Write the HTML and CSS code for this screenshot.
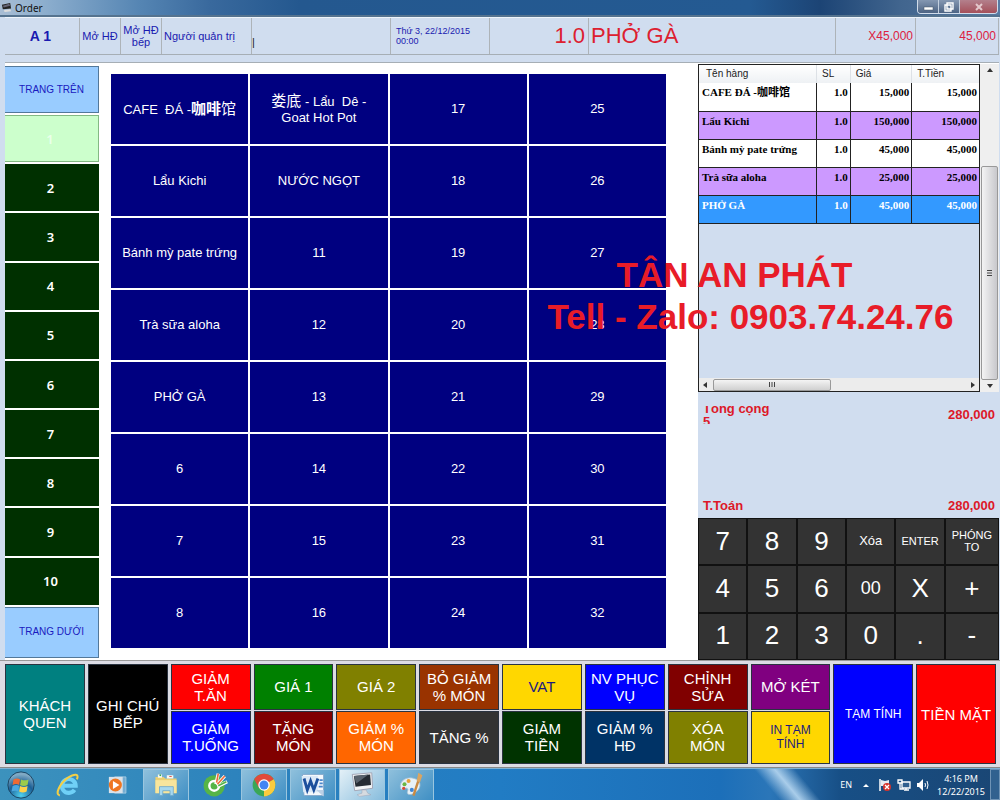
FILE: index.html
```
<!DOCTYPE html>
<html lang="vi">
<head>
<meta charset="utf-8">
<title>Order</title>
<link rel="stylesheet" href="styles.css">
</head>
<body>
<header class="titlebar">
  <svg class="app-icon" viewBox="0 0 12 12" aria-hidden="true"><path d="M1 3 10 1 11 7 2 8z" fill="#222"/><path d="M2 4 9 2 10 4 3 6z" fill="#667"/><path d="M3 9 10 8 11 10 4 11z" fill="#ddd"/></svg>
  <h1 class="title">Order</h1>
  <div class="window-buttons">
    <button class="win" aria-label="Minimize"><svg viewBox="0 0 20 12"><rect x="6" y="6" width="9" height="3" fill="#fff" stroke="#456" stroke-width=".5"/></svg></button>
    <button class="win" aria-label="Restore"><svg viewBox="0 0 20 12"><path d="M8 2h6v6h-6zM6 4h6v6H6z" fill="#5d7594" stroke="#fff" stroke-width="1.4"/><path d="M8.500 6.500h1v1h-1z" fill="#fff"/></svg></button>
    <button class="win close" aria-label="Close"><svg viewBox="0 0 20 12"><path d="M7 3l6 6M13 3l-6 6" stroke="#e4c8cc" stroke-width="2"/></svg></button>
  </div>
</header>

<section class="infobar">
  <div class="cell table-name">A 1</div>
  <button class="cell">Mở HĐ</button>
  <button class="cell two-line">Mở HĐ bếp</button>
  <div class="cell left">Người quản trị</div>
  <input class="cell entry" aria-label="Nhập" value="|">
  <div class="cell left date">Thứ 3, 22/12/2015<br>00:00</div>
  <div class="cell big right">1.0</div>
  <div class="cell big left">PHỞ GÀ</div>
  <div class="cell price">X45,000</div>
  <div class="cell price">45,000</div>
</section>

<main class="main">
  <nav class="pages">
    <button class="page nav-page">TRANG TRÊN</button>
    <button class="page active">1</button>
    <button class="page">2</button>
    <button class="page">3</button>
    <button class="page">4</button>
    <button class="page">5</button>
    <button class="page">6</button>
    <button class="page">7</button>
    <button class="page">8</button>
    <button class="page">9</button>
    <button class="page">10</button>
    <button class="page nav-page">TRANG DƯỚI</button>
  </nav>

  <section class="items">
    <button class="item">CAFE&nbsp; ĐÁ -<span class="han"><b>咖啡</b>馆</span></button>
    <button class="item">Lẩu Kichi</button>
    <button class="item">Bánh mỳ pate trứng</button>
    <button class="item">Trà sữa aloha</button>
    <button class="item">PHỞ GÀ</button>
    <button class="item">6</button>
    <button class="item">7</button>
    <button class="item">8</button>
    <button class="item"><span class="han">娄底</span> - Lẩu&nbsp; Dê -<br>Goat Hot Pot</button>
    <button class="item">NƯỚC NGỌT</button>
    <button class="item">11</button>
    <button class="item">12</button>
    <button class="item">13</button>
    <button class="item">14</button>
    <button class="item">15</button>
    <button class="item">16</button>
    <button class="item">17</button>
    <button class="item">18</button>
    <button class="item">19</button>
    <button class="item">20</button>
    <button class="item">21</button>
    <button class="item">22</button>
    <button class="item">23</button>
    <button class="item">24</button>
    <button class="item">25</button>
    <button class="item">26</button>
    <button class="item">27</button>
    <button class="item">28</button>
    <button class="item">29</button>
    <button class="item">30</button>
    <button class="item">31</button>
    <button class="item">32</button>
  </section>

  <aside class="bill">
    <div class="list-area">
      <div class="list">
        <table class="lines">
          <thead><tr><th class="c-name">Tên hàng</th><th class="c-qty">SL</th><th class="c-price">Giá</th><th>T.Tiền</th></tr></thead>
          <tbody>
            <tr><td>CAFE ĐÁ -咖啡馆</td><td>1.0</td><td>15,000</td><td>15,000</td></tr>
            <tr class="alt"><td>Lẩu Kichi</td><td>1.0</td><td>150,000</td><td>150,000</td></tr>
            <tr><td>Bánh mỳ pate trứng</td><td>1.0</td><td>45,000</td><td>45,000</td></tr>
            <tr class="alt"><td>Trà sữa aloha</td><td>1.0</td><td>25,000</td><td>25,000</td></tr>
            <tr class="selected"><td>PHỞ GÀ</td><td>1.0</td><td>45,000</td><td>45,000</td></tr>
          </tbody>
        </table>
        <div class="hscroll">
          <svg class="arrow" viewBox="0 0 12 12"><path d="M8 3v6L4 6z" fill="#333"/></svg>
          <div class="hthumb"><svg class="grip" viewBox="0 0 8 8"><path d="M1.500 1v5M4 1v5M6.500 1v5" stroke="#444"/></svg></div>
          <svg class="arrow end" viewBox="0 0 12 12"><path d="M4 3v6l4-3z" fill="#333"/></svg>
        </div>
      </div>
      <div class="vscroll">
        <svg class="arrow" viewBox="0 0 12 12"><path d="M3 8h6L6 4z" fill="#333"/></svg>
        <div class="vthumb"><svg class="grip" viewBox="0 0 8 8"><path d="M1 1.500h5M1 4h5M1 6.500h5" stroke="#444"/></svg></div>
        <svg class="arrow" viewBox="0 0 12 12"><path d="M3 4h6L6 8z" fill="#333"/></svg>
      </div>
    </div>
    <div class="totals">
      <div class="total"><span class="clipped">Tổng cộng<br>5</span><span>280,000</span></div>
      <div class="total"><span>T.Toán</span><span>280,000</span></div>
    </div>
    <div class="keypad">
      <button class="key">7</button><button class="key">8</button><button class="key">9</button><button class="key small">Xóa</button><button class="key tiny">ENTER</button><button class="key tiny">PHÓNG TO</button>
      <button class="key">4</button><button class="key">5</button><button class="key">6</button><button class="key medium">00</button><button class="key">X</button><button class="key">+</button>
      <button class="key">1</button><button class="key">2</button><button class="key">3</button><button class="key">0</button><button class="key">.</button><button class="key">-</button>
    </div>
  </aside>

  <div class="watermark"><div class="brand">TÂN AN PHÁT</div><div>Tell - Zalo: 0903.74.24.76</div></div>
</main>

<section class="functions">
  <button class="fn tall teal">KHÁCH<br>QUEN</button>
  <button class="fn tall black">GHI CHÚ<br>BẾP</button>
  <button class="fn red">GIẢM<br>T.ĂN</button>
  <button class="fn blue">GIẢM<br>T.UỐNG</button>
  <button class="fn green">GIÁ 1</button>
  <button class="fn maroon">TẶNG<br>MÓN</button>
  <button class="fn olive">GIÁ 2</button>
  <button class="fn orange">GIẢM %<br>MÓN</button>
  <button class="fn brown">BỎ GIẢM<br>% MÓN</button>
  <button class="fn gray">TĂNG %</button>
  <button class="fn yellow">VAT</button>
  <button class="fn forest">GIẢM<br>TIỀN</button>
  <button class="fn blue">NV PHỤC<br>VỤ</button>
  <button class="fn navy">GIẢM %<br>HĐ</button>
  <button class="fn maroon">CHỈNH<br>SỬA</button>
  <button class="fn olive">XÓA<br>MÓN</button>
  <button class="fn purple">MỞ KÉT</button>
  <button class="fn yellow compact">IN TẠM<br>TÍNH</button>
  <button class="fn tall blue compact">TẠM TÍNH</button>
  <button class="fn tall red">TIỀN MẶT</button>
</section>

<footer class="taskbar">
  <button class="task start" aria-label="Start"><svg viewBox="0 0 32 32"><defs><radialGradient id="orb" cx=".5" cy=".9" r=".8"><stop offset="0" stop-color="#4fd0ee"/><stop offset=".6" stop-color="#1c5f96"/><stop offset="1" stop-color="#7fa9c4"/></radialGradient></defs><circle cx="16" cy="16" r="14" fill="url(#orb)" stroke="#19415f"/><path d="M8 10q4-2 7 0l-1 6q-3-2-7 0z" fill="#ee6a33"/><path d="M16 10q4 2 8 0l-1 6q-4 2-8 0z" fill="#9ccb4a"/><path d="M7 17q4-2 7 0l-1 6q-3-2-7 0z" fill="#4aa7e0"/><path d="M15 17q4 2 8 0l-1 6q-4 2-8 0z" fill="#ffd04a"/></svg></button>
  <button class="task" aria-label="Internet Explorer"><svg viewBox="0 0 32 32"><path d="M24 22a8.500 8.500 0 1 1 1.500-5H9" fill="none" stroke="#6fd0f7" stroke-width="5"/><path d="M6 29c-7-1 0-15 10-22 8-5 14-5 11 2" fill="none" stroke="#f4cf45" stroke-width="2.500"/></svg></button>
  <button class="task" aria-label="Media Player"><svg viewBox="0 0 32 32"><path d="M13 6h14v20H13z" fill="#75add2" stroke="#a9cfe5"/><path d="M6 6h17v20H6z" fill="#d9e2ea"/><circle cx="14" cy="16" r="8" fill="#ef7622"/><path d="M11 11v10l8-5z" fill="#fff"/></svg></button>
  <button class="task open" aria-label="Explorer"><svg viewBox="0 0 32 32"><path d="M3 6h10l2 2h14v18H3z" fill="#e9cf73"/><path d="M6 3h5v4H6zM17 4h8v4h-8z" fill="#f7f7ee"/><path d="M8 3h2v2H8z" fill="#34a853"/><path d="M20 5h3v1h-3z" fill="#d33"/><path d="M3 10h26v16H3z" fill="#f8e59c"/><path d="M8 29V18h17v11h-4v-6h-9v6z" fill="#a7d8ee" stroke="#6ba9cd"/></svg></button>
  <button class="task" aria-label="Cốc Cốc"><svg viewBox="0 0 32 32"><circle cx="15" cy="17" r="13" fill="#56b447"/><circle cx="15" cy="17" r="6" fill="none" stroke="#fff" stroke-width="3"/><path d="M17 15 20 2M18 16 28 5M19 18 31 12" stroke="#fff" stroke-width="4"/><path d="M18 13 20 2M19 15 28 5" stroke="#ef6a3a" stroke-width="2"/><path d="M20 17l10-5" stroke="#56b447" stroke-width="2"/></svg></button>
  <button class="task open" aria-label="Chrome"><svg viewBox="0 0 32 32"><circle cx="16" cy="16" r="14" fill="#3aa757"/><path d="M16 16 3.900 9A14 14 0 0 1 28.100 9z" fill="#e24a3b"/><path d="M16 16 28.100 9A14 14 0 0 1 16 30z" fill="#fbcb3d"/><path d="M4 9 10 20 16 16z" fill="#e24a3b"/><circle cx="16" cy="16" r="7" fill="#fff"/><circle cx="16" cy="16" r="5.500" fill="#4285f4"/></svg></button>
  <button class="task open" aria-label="Word"><svg viewBox="0 0 32 32"><path d="M3 3h26v26H5z" fill="#f4f8fc" stroke="#7fa2c8"/><path d="M2 5h20v20H4z" fill="#dce9f7"/><path d="M5 8l4 14 4-11 4 11 5-14" fill="none" stroke="#1c4f9c" stroke-width="3.500"/><path d="M24 10h4M24 14h4M23 18h5" stroke="#4a86cb" stroke-width="2"/><path d="M20 22h9v8z" fill="#bcd0e6"/></svg></button>
  <button class="task open current" aria-label="Order"><svg viewBox="0 0 32 32"><path d="M4 3 28 1 29 20 7 23z" fill="#f2f4f6" stroke="#99a"/><path d="M6 5 26 3 27 16 8 18z" fill="#252b33"/><path d="M6 5 24 3 9 14z" fill="#59626d"/><path d="M16 22h5l2 4 4 2-14 2-3-2 6-2z" fill="#d6dbe0" stroke="#99a" stroke-width=".5"/></svg></button>
  <button class="task open" aria-label="Paint"><svg viewBox="0 0 32 32"><path d="M3 20C1 10 12 5 20 8c8 2 9 10 4 15-4 4-9 6-12 4-2-3 2-5-1-7-2-1-6 4-8 0z" fill="#e8f1f7" stroke="#a1bfd3"/><circle cx="8" cy="15" r="2.500" fill="#6bb744"/><circle cx="13" cy="11" r="2.500" fill="#e8a13a"/><circle cx="17" cy="22" r="2.500" fill="#3f86d5"/><circle cx="7" cy="20" r="2" fill="#d84a3a"/><path d="M19 29 25 11" stroke="#c98a43" stroke-width="3"/><path d="M23 11l2-10 5 3-3 9z" fill="#d9a562"/></svg></button>
  <div class="tray">
    <span class="lang">EN</span>
    <svg class="tray-icon" viewBox="0 0 14 14" aria-hidden="true"><path d="M4 9h6L7 6z" fill="#fff"/></svg>
    <svg class="tray-icon" viewBox="0 0 14 14" aria-hidden="true"><path d="M2 1v12" stroke="#fff" stroke-width="1.500"/><path d="M3 2l4 1 4-1v6H3z" fill="#e6edf3"/><circle cx="9" cy="9" r="4" fill="#d5332c"/><path d="M7 7l4 4M11 7l-4 4" stroke="#fff" stroke-width="1.300"/></svg>
    <svg class="tray-icon" viewBox="0 0 14 14" aria-hidden="true"><path d="M5 4h8v6H5zM7 12h5M9 10v2" fill="#315f8e" stroke="#fff" stroke-width="1.300"/><path d="M1 2h4v3H1zM3 5v6h4" fill="none" stroke="#fff" stroke-width="1.300"/></svg>
    <svg class="tray-icon" viewBox="0 0 14 14" aria-hidden="true"><path d="M1 5h2l4-4v12L3 9H1z" fill="#fff"/><path d="M9 5q1 2 0 4M11 3q2 4 0 8" fill="none" stroke="#fff"/></svg>
    <time class="clock">4:16 PM<br>12/22/2015</time>
    <button class="show-desktop" aria-label="Show desktop"></button>
  </div>
</footer>
</body>
</html>
```
FILE: styles.css
```
* { box-sizing: border-box; }
body {
  margin: 0;
  min-height: 100vh;
  display: flex;
  flex-direction: column;
  background: #d0ddef;
  font: 14px/16px "Liberation Sans", "Noto Sans CJK SC", sans-serif;
  color: #1a1ab0;
}
button, input {
  margin: 0;
  padding: 0;
  border: 0;
  border-radius: 0;
  background: none;
  font: inherit;
  color: inherit;
}
svg { display: block; }

.titlebar {
  display: flex;
  align-items: center;
  gap: 3px;
  height: 17px;
  padding-left: 1px;
  border-bottom: 2px solid #55738f;
  background: linear-gradient(90deg, #a8bdd4 0, #8fb0cf 40px, #5585b3 140px, #39699d 210px, #24588f 300px, #245a92 75%, #1c4475 82%, #41658e 90%, #587ba3 100%);
}
.app-icon { width: 11px; height: 11px; }
.title {
  margin: 0;
  font: 10px/14px "Noto Sans", sans-serif;
  color: #111;
}
.window-buttons {
  display: flex;
  align-self: flex-start;
  margin-left: auto;
  margin-right: 2px;
  border: 1px solid #d0dcea;
  border-top: 0;
  border-radius: 0 0 4px 4px;
  overflow: hidden;
}
.win {
  width: 21px;
  height: 13px;
  border-right: 1px solid #c4d0df;
  background: linear-gradient(#8497b1, #4d6484);
}
.win svg { height: 12px; margin: 0 auto; }
.close {
  width: 37px;
  border-right: 0;
  background: linear-gradient(#b3808c, #a5505a);
}

.infobar {
  display: grid;
  grid-template-columns: 75fr 41fr 41fr 90fr 139fr 99fr 99fr 247fr 80fr 83fr;
  height: 38px;
  margin: 0 1px 7px 5px;
  border-top: 1px solid #eef4fa;
  border-bottom: 1px solid #a6aeb5;
  font-size: 11px;
  line-height: 12px;
}
.cell {
  display: flex;
  align-items: center;
  justify-content: center;
  min-width: 0;
  border-right: 1px solid #adb3b8;
  white-space: nowrap;
}
.two-line { white-space: normal; }
.left { justify-content: flex-start; padding-left: 2px; }
.right { justify-content: flex-end; padding-right: 3px; }
.table-name { font-size: 14px; font-weight: bold; padding-right: 3px; }
.entry { padding: 12px 0 0; color: #222; }
.date { padding-left: 5px; font-size: 9px; line-height: 10px; }
.big { font-size: 22px; line-height: 24px; color: #dd2030; }
.price { justify-content: flex-end; padding-right: 2px; font-size: 12px; color: #dd2040; }

.main {
  position: relative;
  flex: 1;
  display: flex;
  margin: 0 1px 0 5px;
  border-top: 1px solid #a6aeb5;
  background: #fff;
}
.pages {
  flex: 94;
  display: grid;
  grid-template-rows: repeat(11, 47fr) 51fr;
  gap: 2px;
  padding: 3px 0 2px;
}
.page {
  background: #003000;
  color: #fff;
  font: 600 13px/16px "Noto Sans", sans-serif;
  padding-right: 3px;
}
.active {
  border: 1px solid #83b983;
  border-left: 0;
  background: #ccffcc;
  color: #eaffea;
}
.nav-page {
  border: 1px solid #53789a;
  border-left: 0;
  padding: 0;
  background: #99ccff;
  color: #1a1ac0;
  font: 10px/12px "Liberation Sans", sans-serif;
}
.items {
  flex: 555;
  display: grid;
  grid-template: repeat(8, 1fr) / repeat(4, 1fr);
  grid-auto-flow: column;
  gap: 2px;
  margin: 11px 32px 12px 12px;
}
.item { background: #000080; color: #fff; font-size: 13px; }
.han { font-size: 15px; }

.bill { flex: 301; display: flex; flex-direction: column; min-width: 0; margin-top: 1px; background: #d0ddef; }
.list-area { flex: 1; display: flex; }
.list {
  flex: 1;
  display: flex;
  flex-direction: column;
  min-width: 0;
  border: 1px solid #222;
}
.lines {
  width: 100%;
  table-layout: fixed;
  border-collapse: collapse;
  color: #000;
}
.c-name { width: 42%; }
.c-qty { width: 12%; }
.c-price { width: 22%; }
.lines th {
  height: 18px;
  padding: 0 5px;
  background: linear-gradient(#fff, #eef1f4);
  border-right: 1px solid #dde1e6;
  font: 10px/16px "Liberation Sans", sans-serif;
  color: #222;
  text-align: left;
}
.lines th.c-name { padding-left: 7px; }
.lines td {
  height: 28px;
  padding: 2px 2px 0 3px;
  border-right: 1px solid #222;
  border-bottom: 1px solid #222;
  background: #fff;
  font: bold 11px/14px "Liberation Serif", "Noto Sans CJK SC", serif;
  text-align: right;
  vertical-align: top;
  white-space: nowrap;
}
.lines td:first-child { text-align: left; }
.lines td:last-child, .lines th:last-child { border-right: 0; }
.lines .alt td { background: #cc99ff; }
.lines .selected td { background: #3399ff; color: #fff; }
.hscroll { display: flex; align-items: center; margin-top: auto; height: 13px; background: #ececec; }
.arrow { width: 12px; height: 12px; }
.end { margin-left: auto; }
.hthumb, .vthumb {
  display: flex;
  align-items: center;
  justify-content: center;
  border: 1px solid #999;
  border-radius: 2px;
}
.hthumb { width: 42%; height: 12px; margin-left: 2px; background: linear-gradient(#f4f4f4, #d0d0d0); }
.grip { width: 8px; height: 8px; }
.vscroll {
  display: flex;
  flex-direction: column;
  align-items: center;
  width: 19px;
  background: #efefef;
}
.vthumb { width: 17px; height: 214px; margin-top: auto; background: linear-gradient(90deg, #f4f4f4, #c8c8cc); }
.totals {
  display: flex;
  flex-direction: column;
  justify-content: space-between;
  height: 126px;
  padding: 14px 4px 4px 5px;
  font-size: 13px;
  font-weight: bold;
  color: #dd1828;
}
.total { display: flex; justify-content: space-between; align-items: center; }
.clipped {
  display: flex;
  align-items: center;
  height: 18px;
  line-height: 13px;
  overflow: hidden;
}
.keypad {
  display: grid;
  grid-template: repeat(3, 1fr) / repeat(5, 49fr) 54fr;
  gap: 2px;
  height: 142px;
  padding: 1px;
  background: #111;
}
.key { background: #333; color: #fff; font-size: 26px; line-height: 26px; padding-bottom: 2px; }
.medium { font-size: 18px; }
.small { font-size: 13px; }
.tiny { font-size: 11px; line-height: 12px; }
.watermark {
  position: absolute;
  top: 32%;
  left: 75%;
  width: max-content;
  transform: translateX(-50%);
  font-size: 35px;
  font-weight: bold;
  line-height: 42px;
  text-align: center;
  color: #e81c28;
  pointer-events: none;
}
.brand { padding-right: 32px; }

.functions {
  display: grid;
  grid-template: 46fr 54fr / repeat(12, minmax(0, 1fr));
  grid-auto-flow: column;
  gap: 1px 3px;
  height: 108px;
  padding: 3px 4px 3px 5px;
  border-top: 1px solid #999;
  border-bottom: 1px solid #888;
  background: #dcdce4;
}
.fn {
  border: 1px solid #2a3340;
  color: #fff;
  font-size: 15px;
  line-height: 17px;
  white-space: nowrap;
}
.tall { grid-row: span 2; }
.teal { background: #008080; }
.black { background: #000; }
.red { background: #f00; }
.blue { background: #00f; }
.green { background: #008000; }
.maroon { background: #800000; }
.olive { background: #808000; }
.orange { background: #ff6600; }
.brown { background: #993300; }
.gray { background: #333; }
.yellow { background: #ffd700; color: #1a1a80; }
.forest { background: #003300; }
.navy { background: #003366; }
.purple { background: #800080; }
.compact { font-size: 12px; line-height: 14px; }

.taskbar {
  display: flex;
  gap: 3px;
  height: 32px;
  border-top: 1px solid #7fb2d4;
  background:
    linear-gradient(50deg, transparent 76%, #a9cdea 78%, transparent 80%),
    linear-gradient(90deg, #3c92bd 0, #2c82bd 25%, #217cc4 50%, #1c6fb9 72%, #2b76b8 77%, #174f86 84%, #1a4674 100%);
}
.task {
  display: flex;
  align-items: center;
  justify-content: center;
  width: 46px;
  border: 1px solid transparent;
  border-bottom: 0;
}
.task svg { width: 26px; height: 26px; }
.start { width: 42px; }
.start svg { width: 30px; height: 30px; }
.open { border-color: #9ac6df; background: linear-gradient(135deg, #8fc0dc, #3f8fc4); }
.current { background: linear-gradient(135deg, #e3f0f7, #86bcdd); }
.tray {
  display: flex;
  align-items: center;
  gap: 5px;
  margin-left: auto;
  color: #fff;
  font: 9px/13px "Noto Sans", sans-serif;
}
.lang { margin-right: 2px; }
.tray-icon { width: 14px; height: 14px; }
.clock { text-align: center; margin-left: 2px; }
.show-desktop { align-self: stretch; width: 10px; border: 1px solid #6f93b5; background: #31618f; }
```
